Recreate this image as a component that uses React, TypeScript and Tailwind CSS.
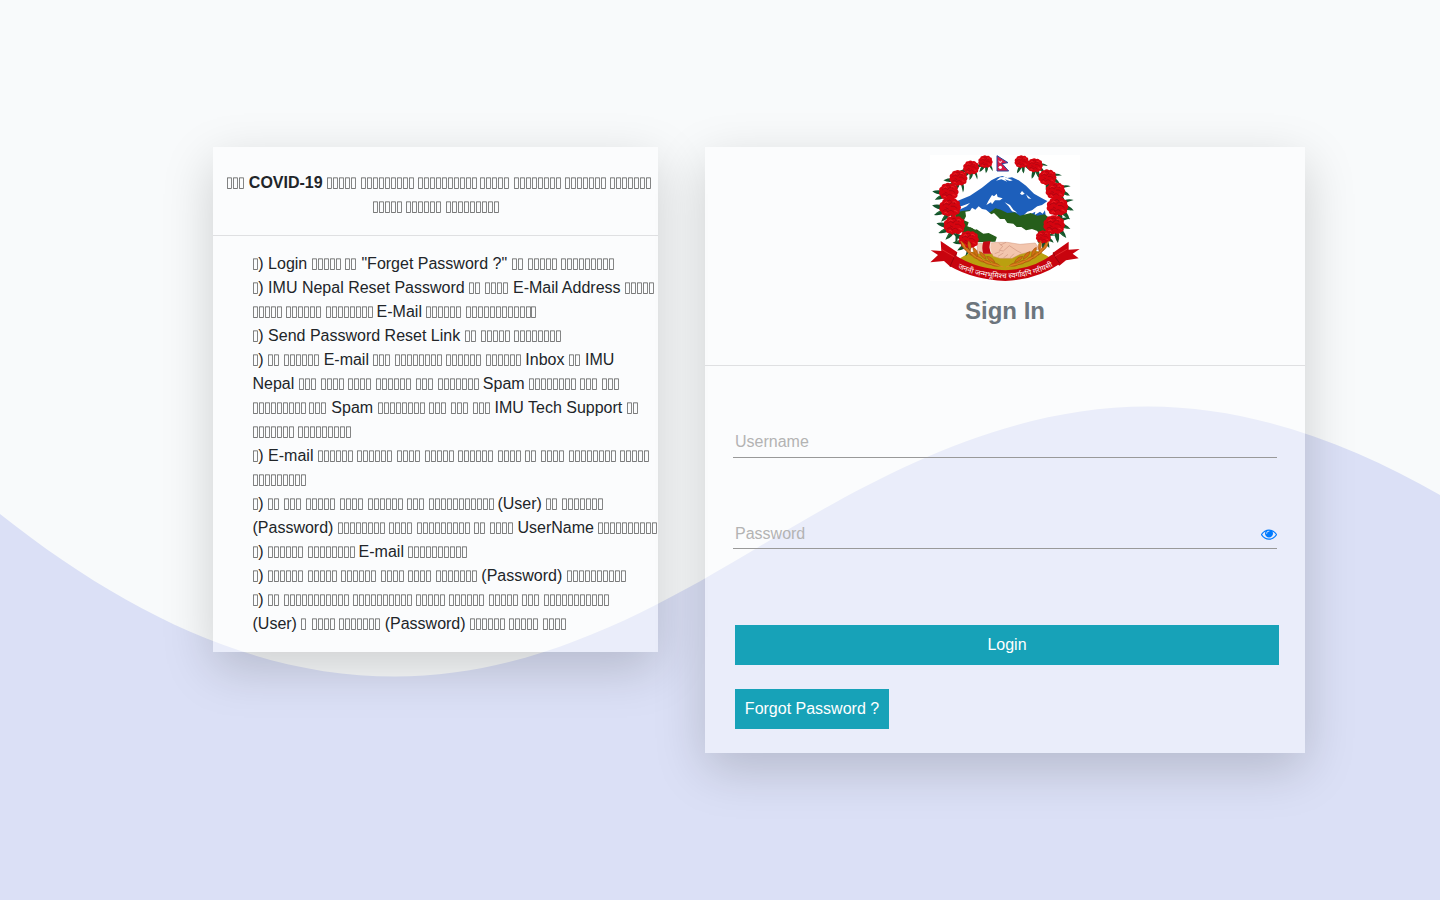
import type { ReactNode } from "react";

const BOX_ADVANCE = 5.83;

function Boxes({ n }: { n: number }) {
  return (
    <span className="inline-block h-6 whitespace-nowrap align-top font-normal opacity-80 grayscale" style={{ width: n * BOX_ADVANCE }}>
      <span className="inline-block origin-left -translate-x-[0.7px] -translate-y-[1.2px] scale-x-[0.88] scale-y-[1.06] text-[14px] leading-6 tracking-[-1.27px]">
        {"▯".repeat(n)}
      </span>
    </span>
  );
}

type Part = string | number;

function Line({ parts }: { parts: Part[] }) {
  const out: ReactNode[] = [];
  parts.forEach((p, i) => {
    if (i > 0 && p !== ")") out.push(" ");
    out.push(typeof p === "number" ? <Boxes key={i} n={p} /> : <span key={i}>{p}</span>);
  });
  return <div className="h-6 whitespace-nowrap leading-6">{out}</div>;
}

const STEPS: Part[][] = [
  [1, ")", "Login", 5, 2, '"Forget Password ?"', 2, 5, 9],
  [1, ")", "IMU Nepal Reset Password", 2, 4, "E-Mail Address", 5],
  [5, 6, 8, "E-Mail", 6, 12],
  [1, ")", "Send Password Reset Link", 2, 5, 8],
  [1, ")", 2, 6, "E-mail", 3, 8, 6, 6, "Inbox", 2, "IMU"],
  ["Nepal", 3, 4, 4, 6, 3, 7, "Spam", 8, 3, 3],
  [9, 3, "Spam", 8, 3, 3, 3, "IMU Tech Support", 2],
  [7, 9],
  [1, ")", "E-mail", 6, 6, 4, 5, 6, 4, 2, 4, 8, 5],
  [9],
  [1, ")", 2, 3, 5, 4, 6, 3, 11, "(User)", 2, 7],
  ["(Password)", 8, 4, 9, 2, 4, "UserName", 10],
  [1, ")", 6, 8, "E-mail", 10],
  [1, ")", 6, 5, 6, 4, 4, 7, "(Password)", 10],
  [1, ")", 2, 11, 10, 5, 6, 5, 3, 11],
  ["(User)", 1, 4, 7, "(Password)", 6, 5, 4],
];

/* x, y, scale, rotation of the leaves */
const FLOWERS: [number, number, number, number][] = [
  [196, 51, 0.72, 20],
  [153, 69, 0.8, 30],
  [115, 100, 0.9, 40],
  [86, 141, 0.98, 50],
  [90, 188, 1.08, 55],
  [103, 242, 1.08, 55],
  [146, 285, 1, 70],
  [305, 51, 0.72, -20],
  [344, 62, 0.8, -30],
  [382, 98, 0.9, -40],
  [406, 139, 0.98, -50],
  [412, 186, 1.08, -55],
  [402, 241, 1.08, -55],
  [370, 277, 0.75, -40],
];

function Flower({ x, y, s, r }: { x: number; y: number; s: number; r: number }) {
  return (
    <g transform={`translate(${x} ${y}) scale(${s})`}>
      <g fill="#14532b" transform={`rotate(${r})`}>
        <path d="M0 0Q-14 26 -9 48Q8 30 6 2ZM0 0Q6 26 18 43Q26 22 8 0ZM0 0Q-28 18 -34 37Q-12 33 2 6ZM0 0Q24 10 42 26Q38 8 10 -6Z" />
        <path d="M-3 10L-9 40M8 12L15 36" stroke="#2c7a3d" strokeWidth="2" />
      </g>
      <path
        fill="#d5040f"
        d="M-10 -25Q-2 -31 6 -25Q15 -29 20 -20Q30 -19 27 -8Q34 0 27 7Q29 17 19 19Q12 27 4 21Q-4 29 -12 21Q-23 22 -24 12Q-33 6 -28 -2Q-32 -12 -22 -16Q-20 -26 -10 -25Z"
      />
      <path
        fill="none"
        stroke="#a30612"
        strokeWidth="2.2"
        d="M-20 -6Q-11 -16 -3 -7Q3 -19 14 -11M-20 9Q-10 1 -6 12Q4 2 10 13M2 -4Q12 -7 20 2M-8 -18Q0 -24 5 -17M-12 0L-4 4"
      />
      <path fill="none" stroke="#ff3a38" strokeWidth="1.6" d="M-16 -12Q-10 -19 -5 -14M7 -15Q14 -20 18 -13M-16 15Q-10 10 -7 17M12 8Q20 8 21 13" />
    </g>
  );
}

const WHEAT: [number, number, number][] = [
  [131, 303, 62],
  [145, 318, 55],
  [161, 331, 45],
  [180, 343, 34],
  [202, 352, 22],
  [225, 359, 12],
  [148, 302, 80],
  [166, 320, 62],
  [188, 331, 48],
  [212, 343, 36],
];

function Wheat() {
  return (
    <>
      {WHEAT.map(([x, y, r]) => (
        <path
          key={x}
          transform={`translate(${x} ${y}) rotate(${r})`}
          d="M-15 0Q-2 -10 16 0Q-2 9 -15 0Z"
          fill="#cf7014"
          stroke="#9c480d"
          strokeWidth="1.3"
        />
      ))}
      <path d="M122 288Q150 345 250 366" fill="none" stroke="#e08a24" strokeWidth="2.5" />
    </>
  );
}

function Emblem() {
  return (
    <svg className="block h-[126px] w-[150px] bg-white" viewBox="30 30 450 378" role="img">
      <path
        fill="#1d5fbb"
        d="M106 192L112 168L150 152L186 128L214 106L232 97L247 93L262 99L276 97L296 106L318 122L342 146L366 160L386 170L374 190L380 232L112 236Z"
      />
      <path
        fill="#fff"
        d="M240 97L254 96L278 106L270 108L254 103L262 110L244 103L228 107ZM216 150L222 154L230 146L233 156L248 160L240 166L225 166L216 178L213 172L199 180L205 168ZM254 172L270 180L280 194L292 203L276 199L266 184ZM306 138L314 146L306 150L300 146ZM318 148L334 162L324 160ZM388 164L366 180L352 184L336 196L322 200L312 210L322 212L346 200L344 210L360 200L368 206L380 188ZM106 188L128 182L150 174L140 184L118 194Z"
      />
      <path
        fill="#265e1b"
        d="M104 204L126 198L146 196L180 202L210 202L226 190L242 194L262 204L284 202L300 212L332 204L352 212L374 208L392 222L388 262L372 294L300 292L230 288L170 290L128 264L112 240Z"
      />
      <path
        fill="#fff"
        d="M136 200L150 198L156 188L166 194L176 184L186 192L198 194L214 208L222 204L240 222L254 222L262 234L280 236L290 246L304 246L318 256L336 252L352 258L358 274L352 288L358 300L150 300L150 262L164 264L158 250L142 244L146 232L132 226L138 214Z"
      />
      <path fill="#265e1b" d="M150 247L166 254L178 250L196 262L206 256L218 264L232 272L226 290L168 292L150 270Z" />
      <path
        fill="#fff"
        d="M158 242L180 246L196 256L212 252L232 264L248 272L270 278L292 282L318 280L346 286L344 294L236 290L230 276L206 264L190 266L172 254Z"
      />
      <path fill="#baa00f" d="M120 340Q180 302 256 306Q334 300 390 338Q360 374 256 382Q160 376 120 340Z" />
      <path
        fill="#f3c6ae"
        stroke="#cf927b"
        strokeWidth="1.4"
        d="M172 296L236 292L262 292L300 298L346 294L358 312L324 322L300 328L276 340L240 340L220 334L216 326L172 326Z"
      />
      <path
        fill="none"
        stroke="#c98a76"
        strokeWidth="1.6"
        d="M236 294L248 304L238 316L250 318L268 302L292 318L304 324M224 326L240 320M234 334L250 324M250 339L264 328M270 338L282 326M258 292L242 300"
      />
      <path fill="#c40a14" d="M190 290L212 288Q204 308 214 326L190 326Q184 308 190 290Z" />
      <path d="M213 290Q206 308 214 324" fill="none" stroke="#fff" strokeWidth="1.5" />

      {FLOWERS.map(([x, y, s, r]) => (
        <Flower key={`${x}-${y}`} x={x} y={y} s={s} r={r} />
      ))}

      <Wheat />
      <g transform="translate(508 0) scale(-1 1)">
        <Wheat />
      </g>

      <g fill="#c8040e">
        <path d="M62 288L112 322L104 352L92 366L72 348L31 352L54 330L32 316L64 318Z" />
        <path d="M446 290L398 324L404 350L418 362L438 346L476 340L458 326L479 312L446 314Z" />
        <path d="M104 330Q170 372 256 376Q342 372 400 326L420 356Q350 404 256 408Q160 404 90 364Z" />
      </g>
      <path d="M110 324L104 334L90 364M400 322L404 334L420 356" fill="none" stroke="#8f040b" strokeWidth="2.5" />
      <path d="M66 314L104 336M442 312L404 334" fill="none" stroke="#ee3b3b" strokeWidth="2" />
      <path id="motto" d="M108 366Q170 398 256 400Q342 397 404 360" fill="none" />
      <text className="fill-white font-['Noto_Sans',sans-serif] text-[22px]" textAnchor="middle">
        <textPath href="#motto" startOffset="50%" textLength="296" lengthAdjust="spacingAndGlyphs">
          जननी जन्मभूमिश्च स्वर्गादपि गरीयसी
        </textPath>
      </text>

      <path d="M231 32L264 53L246 56L266 78L231 78Z" fill="#d91a42" stroke="#27459c" strokeWidth="3" />
      <path d="M236 47Q240 54 246 47Q245 53 241 53Q237 53 236 47Z" fill="#fff" stroke="#fff" />
      <circle cx="241" cy="67" r="5" fill="#fff" />
    </svg>
  );
}

function EyeIcon() {
  return (
    <svg className="mt-0.5 size-4 fill-[#007bff]" viewBox="0 0 1792 1792">
      <path d="M1664 960q-152-236-381-353 61 104 61 225 0 185-131.5 316.5t-316.5 131.5-316.5-131.5-131.5-316.5q0-121 61-225-229 117-381 353 133 205 333.5 326.5t434.5 121.5 434.5-121.5 333.5-326.5zm-720-384q0-20-14-34t-34-14q-125 0-214.5 89.5t-89.5 214.5q0 20 14 34t34 14 34-14 14-34q0-86 61-147t147-61q20 0 34-14t14-34zm848 384q0 34-20 69-140 230-376.5 368.5t-499.5 138.5-499.5-139-376.5-368q-20-35-20-69t20-69q140-229 376.5-368t499.5-139 499.5 139 376.5 368q20 35 20 69z" />
    </svg>
  );
}

export default function App() {
  return (
    <div className="relative h-[900px] w-[1440px] overflow-hidden bg-[#f8fafb] font-['Liberation_Sans',sans-serif] text-base text-[#212529]">
      <svg className="absolute inset-0 size-full" viewBox="0 0 1440 900">
        <path
          fill="#dbe0f6"
          d="M0 514C125 613 255 676.5 395 676.5C535 676.5 655 609 757 548C870 480 1000 406.5 1148 406.5C1250 406.5 1350 443 1440 495V900H0Z"
        />
      </svg>

      <main className="relative flex items-start gap-[47px] pt-[147px] pl-[213px]">
        <section className="w-[445px] bg-[#feffff]/42 shadow-[0_16px_48px_rgba(0,0,0,0.175)]">
          <header className="flex h-[89px] flex-col items-center border-b border-[#dfe0e2] pt-6 font-bold">
            <div className="pl-[7px]">
              <Line parts={[3, "COVID-19", 5, 9, 10, 5, 8, 7, 7]} />
            </div>
            <Line parts={[5, 6, 9]} />
          </header>
          <div className="pt-4 pb-4 pl-[39.5px]">
            {STEPS.map((parts, i) => (
              <Line key={i} parts={parts} />
            ))}
          </div>
        </section>

        <section className="h-[606px] w-[600px] bg-[#feffff]/42 shadow-[0_16px_48px_rgba(0,0,0,0.175)]">
          <header className="flex h-[219px] flex-col items-center border-b border-[#dfe0e2] pt-2">
            <Emblem />
            <h1 className="mt-[15px] text-2xl leading-[29px] font-bold text-[#6c757d]">Sign In</h1>
          </header>
          <form className="flex flex-col pr-[26px] pl-7">
            <input
              type="text"
              placeholder="Username"
              className="mt-[60px] h-8 w-[544px] border-b border-[#999] px-0.5 outline-none placeholder:text-[#b3b3b3]"
            />
            <div className="mt-[59px] flex h-8 w-[544px] items-center border-b border-[#999]">
              <input
                type="password"
                placeholder="Password"
                className="min-w-0 flex-1 px-0.5 pt-0.5 outline-none placeholder:text-[#b3b3b3]"
              />
              <EyeIcon />
            </div>
            <button type="button" className="mt-[76px] ml-0.5 h-10 w-[544px] bg-[#17a2b8] text-white">
              Login
            </button>
            <button type="button" className="mt-6 ml-0.5 h-10 w-[154px] bg-[#17a2b8] text-white">
              Forgot Password ?
            </button>
          </form>
        </section>
      </main>
    </div>
  );
}
